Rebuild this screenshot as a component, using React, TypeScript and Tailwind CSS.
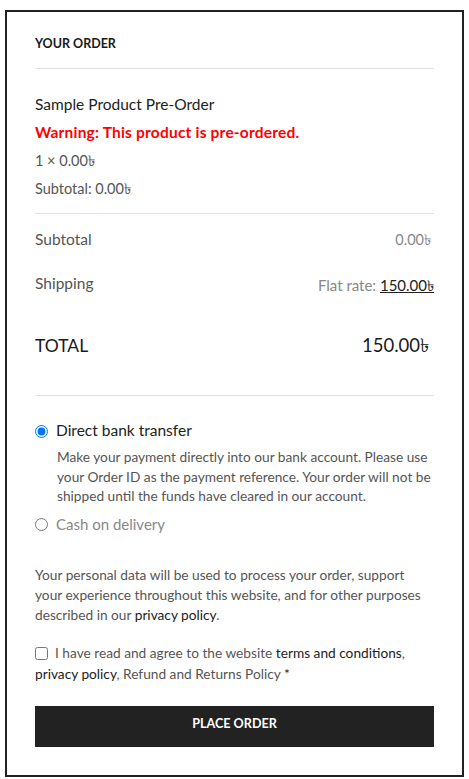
export default function App() {
  return (
    <div className="bg-white min-h-[779px] pt-[10px] pl-[5px]" style={{ fontFamily: 'Lato, "Noto Sans", "DejaVu Sans", sans-serif' }}>
      <div className="w-[459px] h-[767px] border-2 border-[#222] px-[28px]">
        <div className="pt-[24px] pb-[16px] border-b border-[#e2e2e2]">
          <h3 className="text-[12.5px] leading-[16px] font-bold text-[#1a1a1a] uppercase">Your Order</h3>
        </div>

        <div className="pt-[21px] pb-[10px] border-b border-[#e2e2e2] text-[14.5px] text-[#555]">
          <div className="leading-[28px] text-[15.5px] text-[#222]">Sample Product Pre-Order</div>
          <div className="leading-[29px] text-[15.5px] tracking-[0.2px] font-bold text-[#ff0000]">Warning: This product is pre-ordered.</div>
          <div className="leading-[28px]">1 × 0.00৳</div>
          <div className="leading-[28px]">Subtotal: 0.00৳</div>
        </div>

        <div className="pb-[8px] border-b border-[#e2e2e2]">
          <div className="h-[51px] flex items-center justify-between text-[15.5px]">
            <span className="text-[#555]">Subtotal</span>
            <span className="text-[14.5px] text-[#888] pr-[3px]">0.00৳</span>
          </div>
          <div className="h-[40px] flex items-center justify-between text-[15.5px]">
            <span className="text-[#555] pb-[3px]">Shipping</span>
            <span className="text-[15px] text-[#888]">
              Flat rate: <span className="text-[#222] underline">150.00৳</span>
            </span>
          </div>
          <div className="h-[82px] flex items-center justify-between text-[17.5px] text-[#1a1a1a]">
            <span>TOTAL</span>
            <span className="text-[18.5px] pr-[5px]">150.00৳</span>
          </div>
        </div>

        <div className="pt-[23px]">
          <label className="h-[24px] flex items-center gap-[8px] text-[15.5px] text-[#222]">
            <input type="radio" name="pay" defaultChecked className="w-[13px] h-[13px] m-0" />
            Direct bank transfer
          </label>
          <p className="mt-[4px] pl-[22px] text-[13.7px] leading-[19.5px] text-[#555]">
            Make your payment directly into our bank account. Please use your Order ID as the payment reference. Your order will not be shipped until the funds have cleared in our account.
          </p>
          <label className="mt-[7px] h-[24px] flex items-center gap-[8px] text-[15px] text-[#888]">
            <input type="radio" name="pay" className="w-[13px] h-[13px] m-0" />
            Cash on delivery
          </label>

          <p className="mt-[28px] text-[13.7px] leading-[20px] text-[#555]">
            Your personal data will be used to process your order, support your experience throughout this website, and for other purposes described in our <a className="text-[#222]">privacy policy</a>.
          </p>

          <label className="mt-[17px] block text-[13.7px] leading-[21px] text-[#555]">
            <input type="checkbox" className="w-[13px] h-[13px] m-0 mr-[7px] align-[-2px]" />
            I have read and agree to the website <a className="text-[#222]">terms and conditions</a>, <a className="text-[#222]">privacy policy</a>, Refund and Returns Policy <span className="text-[#222]">*</span>
          </label>

          <button className="mt-[22px] w-full h-[41px] pb-[3px] bg-[#222] text-white text-[12.6px] font-bold uppercase">
            Place Order
          </button>
        </div>
      </div>
    </div>
  );
}
